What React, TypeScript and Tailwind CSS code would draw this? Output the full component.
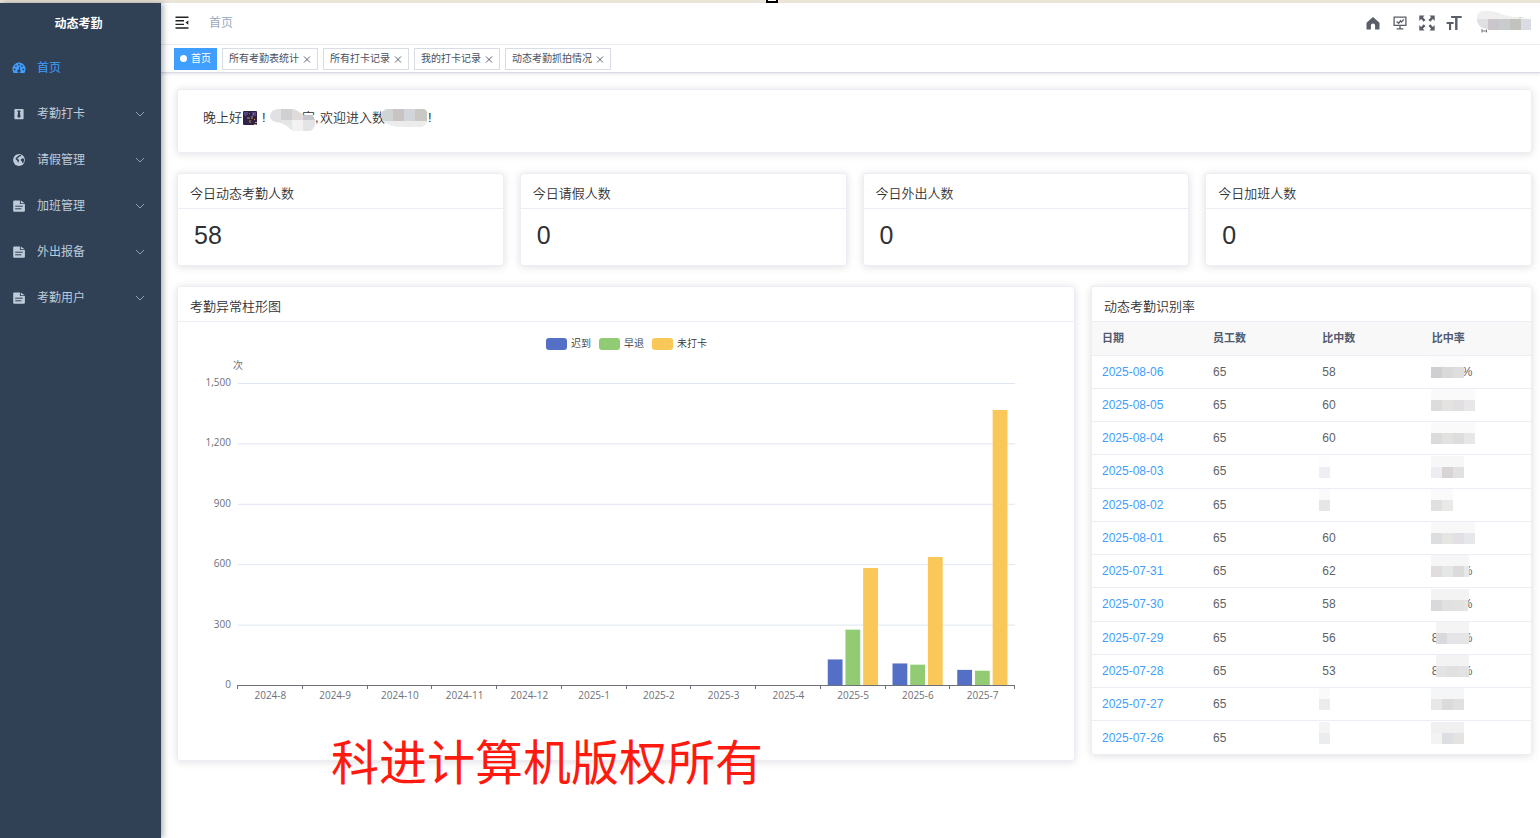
import type { ReactNode } from 'react';

type Block = [x: number, y: number, w: number, h: number, fill: string];

interface RateRow {
  date: string;
  staff: number;
  matched: number | null;
  rate: string;
  matchedBlocks?: Block[];
  rateBlocks: Block[];
}

const menu = [
  { label: '考勤打卡', icon: 'info' },
  { label: '请假管理', icon: 'globe' },
  { label: '加班管理', icon: 'file' },
  { label: '外出报备', icon: 'file' },
  { label: '考勤用户', icon: 'file' },
];

const tags = ['所有考勤表统计', '所有打卡记录', '我的打卡记录', '动态考勤抓拍情况'];

const stats = [
  { title: '今日动态考勤人数', value: 58 },
  { title: '今日请假人数', value: 0 },
  { title: '今日外出人数', value: 0 },
  { title: '今日加班人数', value: 0 },
];

const months = [
  '2024-8', '2024-9', '2024-10', '2024-11', '2024-12', '2025-1',
  '2025-2', '2025-3', '2025-4', '2025-5', '2025-6', '2025-7',
];

const series = [
  { name: '迟到', color: '#5470c6', data: [0, 0, 0, 0, 0, 0, 0, 0, 0, 127, 107, 75] },
  { name: '早退', color: '#91cc75', data: [0, 0, 0, 0, 0, 0, 0, 0, 0, 275, 101, 71] },
  { name: '未打卡', color: '#fac858', data: [0, 0, 0, 0, 0, 0, 0, 0, 0, 581, 636, 1366] },
];

// masked values: a pale upper strip and a darker lower strip
const strip = (x: number, colors: string[], top = '#fafafa'): Block[] => [
  [x, 0, colors.length * 11, 11, top],
  ...colors.map((c, i): Block => [x + i * 11, 11, 11, 11, c]),
];

const rows: RateRow[] = [
  { date: '2025-08-06', staff: 65, matched: 58, rate: '89.23%', rateBlocks: strip(0, ['#cfcfd1', '#d9d9d9', '#dededf'], '#fcfcfc') },
  { date: '2025-08-05', staff: 65, matched: 60, rate: '', rateBlocks: strip(0, ['#dcdcdd', '#e4e3e2', '#e1dfe0', '#e7e7e9']) },
  { date: '2025-08-04', staff: 65, matched: 60, rate: '', rateBlocks: strip(0, ['#dbdbdc', '#e2e2e1', '#dfdcdd', '#e7e7e9']) },
  { date: '2025-08-03', staff: 65, matched: null, rate: '', matchedBlocks: strip(0, ['#eeeef3'], '#fdfdfd'), rateBlocks: strip(0, ['#ededf1', '#d8d4d3', '#e1e1df'], '#f7f7f7') },
  { date: '2025-08-02', staff: 65, matched: null, rate: '', matchedBlocks: strip(0, ['#e5e6e8']), rateBlocks: strip(0, ['#dfe0e2', '#e9e9e8']) },
  { date: '2025-08-01', staff: 65, matched: 60, rate: '', rateBlocks: strip(0, ['#dddee0', '#e5e5e2', '#e2e0e4', '#e6e7e8'], '#f8f8f8') },
  { date: '2025-07-31', staff: 65, matched: 62, rate: '95.38%', rateBlocks: [...strip(0, ['#e1dddf', '#e5e7e6', '#dbdbda'], '#f6f6f6'), [33, 11, 5, 11, '#e6e7e8'], [33, 0, 5, 11, '#f6f6f6']] },
  { date: '2025-07-30', staff: 65, matched: 58, rate: '89.23%', rateBlocks: [...strip(0, ['#d9d9db', '#e1e1e1', '#e2e2e0'], '#f3f3f3'), [33, 11, 4, 11, '#e4e5e5'], [33, 0, 5, 11, '#f3f3f3']] },
  { date: '2025-07-29', staff: 65, matched: 56, rate: '86.15%', rateBlocks: strip(5, ['#dadadd', '#e5e4e8', '#e5e5e5'], '#f4f4f4') },
  { date: '2025-07-28', staff: 65, matched: 53, rate: '81.54%', rateBlocks: strip(5, ['#e3e3e3', '#e0e0df', '#e2e2e2'], '#f3f3f3') },
  { date: '2025-07-27', staff: 65, matched: null, rate: '', matchedBlocks: strip(0, ['#ececec']), rateBlocks: strip(0, ['#e9e6e6', '#dbdbdb', '#e2e0de'], '#f5f6f7') },
  { date: '2025-07-26', staff: 65, matched: null, rate: '', matchedBlocks: strip(0, ['#ebeced'], '#f5f4f5'), rateBlocks: strip(0, ['#f3f3f3', '#dddee1', '#e5e3e2'], '#f0f0f0') },
];

function MenuIcon({ name }: { name: string }) {
  if (name === 'home') {
    return (
      <svg viewBox="0 0 14 12" className="h-3 w-3.5 shrink-0">
        <path fill="currentColor" d="M7 .6A6.5 6.5 0 0 0 .5 7.1c0 1.4.4 2.9 1.1 4h10.8c.7-1.1 1.1-2.6 1.1-4A6.5 6.5 0 0 0 7 .6Z" />
        <g fill="#304156">
          <circle cx="2.7" cy="7.4" r=".9" />
          <circle cx="4" cy="4.1" r=".9" />
          <circle cx="7" cy="2.7" r=".9" />
          <circle cx="10" cy="4.1" r=".9" />
          <circle cx="11.3" cy="7.4" r=".9" />
          <path d="m7.4 4.6.9.2-.5 3a1.6 1.6 0 1 1-1-.2Z" />
        </g>
      </svg>
    );
  }
  if (name === 'info') {
    return (
      <svg viewBox="0 0 14 12" className="h-3 w-3.5 shrink-0">
        <rect x="2.4" y=".9" width="9.2" height="10.4" rx=".8" fill="currentColor" />
        <path fill="#304156" d="M5.4 2.4h3.2v1.1l-.7.5.7 4.8L7 10.1 5.4 8.8l.7-4.8-.7-.5Z" />
      </svg>
    );
  }
  if (name === 'globe') {
    return (
      <svg viewBox="0 0 14 12" className="h-3 w-3.5 shrink-0">
        <circle cx="7" cy="6" r="5.9" fill="currentColor" />
        <path fill="#304156" d="M7.4 1 9 1.1l.3.6-1.1.9-1.2.2-.5 1-1.1.4.1.7 1.2.5.5 1-.7 1.1-.2 1.3-.8-.8-.3-1.6L3.9 5.6l-.4-1.2 1.3-1.5Z" />
        <path fill="#304156" d="m8.9 5.3 1.4-1 1.6.5.3 1.6-1 2.5-.9.4-.3-1.9L8.8 6.6Z" />
      </svg>
    );
  }
  return (
    <svg viewBox="0 0 14 12" className="h-3 w-3.5 shrink-0">
      <path fill="currentColor" d="M2.2.4h5.7v3.7h5v6.6a1 1 0 0 1-1 1H2.2a1 1 0 0 1-1-1V1.4a1 1 0 0 1 1-1Z" />
      <path fill="currentColor" d="M8.8.5 12.7 3.3H8.8Z" />
      <path stroke="#304156" strokeWidth="1" d="M3.2 6.2h7.6M3.2 8.8h6.2" />
    </svg>
  );
}

function Chevron() {
  return (
    <svg viewBox="0 0 10 6" className="ml-auto h-1.5 w-2.5" fill="none" stroke="#909daa">
      <path d="m1 1 4 4 4-4" />
    </svg>
  );
}

function Sidebar() {
  return (
    <aside className="relative z-10 w-[161px] shrink-0 bg-[#304156] text-xs text-[#bfcbd9] shadow-[2px_0_6px_rgba(0,21,41,0.35)]">
      <h1 className="flex h-[41px] items-center justify-center pr-1 text-xs font-bold text-white">动态考勤</h1>
      <nav>
        <a href="#home" className="flex h-[47px] items-center gap-[11px] pr-4 pl-3 text-[#409eff]">
          <MenuIcon name="home" />
          首页
        </a>
        {menu.map((item) => (
          <button key={item.label} type="button" className="flex h-[46px] w-full items-center gap-[11px] pr-4 pl-3 text-left">
            <MenuIcon name={item.icon} />
            {item.label}
            <Chevron />
          </button>
        ))}
      </nav>
    </aside>
  );
}

function IconButton({ label, children }: { label: string; children: ReactNode }) {
  return (
    <button type="button" aria-label={label} className="h-4 w-4">
      {children}
    </button>
  );
}

function Navbar() {
  return (
    <header className="flex h-[42px] items-center border-b border-[#f0f1f2] pr-2 pb-px pl-[13px]">
      <button type="button" aria-label="折叠菜单" className="h-4 w-4">
        <svg viewBox="0 0 16 16" className="h-4 w-4" stroke="#222" strokeWidth="1.4">
          <path d="M1.5 2.2h13M1.5 5.8h8.5M1.5 9.4h8.5M1.5 13h13" />
          <path d="M14.3 5.4v4.4l-2.8-2.2Z" fill="#222" stroke="none" />
        </svg>
      </button>
      <a href="#home" className="ml-[19px] text-xs text-[#97a8be]">首页</a>
      <div className="ml-auto flex items-center gap-[11px]">
        <IconButton label="主页">
          <svg viewBox="0 0 16 16" className="h-4 w-4">
            <path fill="#5a5e66" d="M8 1.9 1.5 7.8v6.6h4.4v-3.8a2.1 2.1 0 0 1 4.2 0v3.8h4.4V7.8Z" />
          </svg>
        </IconButton>
        <IconButton label="监控">
          <svg viewBox="0 0 16 16" className="h-4 w-4" fill="none" stroke="#5a5e66" strokeWidth="1.3">
            <path d="M2.1 2.2h11.8v8.1H2.1ZM8 10.3v3.3M4.6 13.8h6.8" />
            <path d="m4.6 6.4 2.1 1.8 1.8-2.4 1 1.2 2.3-2.6" />
          </svg>
        </IconButton>
        <IconButton label="全屏">
          <svg viewBox="0 0 16 16" className="h-4 w-4" fill="#5a5e66">
            <path d="M.3.6h5.3L3.9 2.3l2.6 2.6-1.8 1.8L2.1 4.1.3 5.9Z" />
            <path d="M15.7.6v5.3l-1.8-1.8-2.6 2.6-1.8-1.8 2.6-2.6L10.4.6Z" />
            <path d="M.3 15.4v-5.3l1.8 1.8 2.6-2.6 1.8 1.8-2.6 2.6 1.7 1.7Z" />
            <path d="M15.7 15.4h-5.3l1.7-1.7-2.6-2.6 1.8-1.8 2.6 2.6 1.8-1.8Z" />
          </svg>
        </IconButton>
        <IconButton label="字体大小">
          <svg viewBox="0 0 16 16" className="h-4 w-4" fill="#5a5e66">
            <path d="M5.1.9h10.6v2.2h-4.2v11.8H9.1V3.1h-4Z" />
            <path d="M.6 7.1h7v1.9H5.1v5.9H3V9H.6Z" />
          </svg>
        </IconButton>
        <button type="button" aria-label="用户" className="ml-[3px]">
          <svg viewBox="0 0 56 24" className="h-6 w-14">
            <path stroke="#666" strokeWidth=".9" d="M6 18v3.5M10.5 18.6v2.8M6 20h5M43 6.7l5 1" />
            <path fill="#efeff0" d="M1 8C0 1 6-1 14 0c9 1 14 5 24 6 6 0 10 1 16 2v3H1Z" />
            <path fill="#e1dfe3" d="M1 8h11v10C5 18 1 14 1 8Z" />
            <path fill="#cac6cb" d="M12 8h11v11H12Z" />
            <path fill="#c9cccd" d="M23 8h11v11H23Z" />
            <path fill="#c2c3bf" d="M34 8h11v11H34Z" />
            <path fill="#d9dce2" d="M45 8h10v11H45Z" />
          </svg>
        </button>
      </div>
    </header>
  );
}

function TagsView() {
  return (
    <div className="flex h-7 items-center gap-[5px] border-b border-[#d8dce5] pl-[13px] text-[10px] text-[#495060] shadow-[0_1px_3px_rgba(0,0,0,0.12)]">
      <a href="#home" className="flex h-[22px] items-center gap-1 bg-[#409eff] px-1.5 text-white">
        <span className="size-[7px] rounded-full bg-white" />
        首页
      </a>
      {tags.map((tag) => (
        <div key={tag} className="flex h-[22px] items-center gap-1 border border-[#d8dce5] px-1.5">
          <a href="#tag">{tag}</a>
          <button type="button" aria-label={`关闭${tag}`} className="size-2">
            <svg viewBox="0 0 8 8" className="size-2" stroke="#495060" strokeWidth=".9">
              <path d="m1 1.5 6 6M7 1.5l-6 6" />
            </svg>
          </button>
        </div>
      ))}
    </div>
  );
}

function Card({ title, className = '', children }: { title?: string; className?: string; children: ReactNode }) {
  return (
    <section className={`overflow-hidden rounded-[3px] border border-[#ebeef5] bg-white shadow-[0_1px_9px_rgba(0,0,0,0.13)] ${className}`}>
      {title && (
        <h2 className="flex h-[35px] items-end border-b border-[#ebeef5] px-3 pb-1 text-[13px] leading-5 font-[350] text-[#303133]">
          {title}
        </h2>
      )}
      {children}
    </section>
  );
}

function NightEmoji() {
  return (
    <svg viewBox="0 0 14 14" className="mx-px size-3.5">
      <rect width="14" height="14" rx="1" fill="#2f2446" />
      <path fill="#54427c" d="M1 1h4v3H1ZM9 1h4v4H9Z" />
      <path fill="#7d6ba6" d="M10 2h1v2h-1ZM2 4h1v1H2ZM6 2h1v1H6Z" />
      <path fill="#7c5a52" d="M4 6h3v2H4ZM8 5h2v3H8ZM6 9h2v3H6Z" />
      <path fill="#c79a52" d="M11 8h1v1h-1ZM12 11h2v1h-2ZM11 13h2v1h-2Z" />
    </svg>
  );
}

function Welcome() {
  return (
    <Card className="h-16 px-6 pt-[18px]">
      <p className="flex items-center pl-px text-[13px] leading-5 font-[350] text-[#303133]">
        晚上好
        <NightEmoji />
        <span className="w-3 pl-1">!</span>
        <span className="relative flex w-[45px] justify-end">
          家
          <svg viewBox="0 0 45 24" className="absolute top-0 left-0 h-6 w-[45px]">
            <path fill="#e1e0e2" d="M0 9C0 3 4 1 10 1h1v14C5 14 1 13 0 9Z" />
            <path fill="#d0cfd2" d="M11 1h11v11H11Z" />
            <path fill="#dfdbdb" d="M22 1c4 0 6 3 11 5v6H22Z" />
            <path fill="#c8c9ce" d="M33 7h9c2 2 3 4 3 6H33Z" />
            <path fill="#e2e7e6" d="M11 12h11v10c-4-3-6-5-11-7Z" />
            <path fill="#f2f2f2" d="M22 12h11v11H22Z" />
            <path fill="#e3e4e6" d="M33 12h12c1 6-2 11-6 11h-6Z" />
          </svg>
        </span>
        <span className="w-[5px]">,</span>
        欢迎进入
        <span className="relative flex w-[56px]">
          数
          <svg viewBox="0 0 46 20" className="absolute top-0 left-[9px] h-5 w-[46px]">
            <path fill="#d0d4d5" d="M0 6c1-3 4-5 8-5h4v12H3C1 12 0 9 0 6Z" />
            <path fill="#c9c4c4" d="M12 1h11v12H12Z" />
            <path fill="#d2d6db" d="M23 1h11v12H23Z" />
            <path fill="#c9c8c4" d="M34 1h8c3 0 4 2 4 4v8H34Z" />
            <path fill="#ececec" d="M3 13h43c-1 4-3 6-8 6H23c-8 0-16-1-20-6Z" />
          </svg>
        </span>
        !
      </p>
    </Card>
  );
}

function BarChart() {
  const left = 60;
  const right = 837;
  const top = 61;
  const bottom = 363;
  const band = (right - left) / months.length;
  const y = (v: number) => bottom - (v / 1500) * (bottom - top);
  const legendX = [369, 422, 475];

  return (
    <svg viewBox="0 0 896 438" className="block w-full" role="img" aria-label="考勤异常柱形图">
      <g className="font-['Open_Sans','Noto_Sans_CJK_SC',sans-serif] text-[10px]">
        {series.map((s, i) => (
          <g key={s.name}>
            <rect x={legendX[i] - 1} y="16" width="21" height="12" rx="3" fill={s.color} />
            <text x={legendX[i] + 24} y="25" fill="#333" className="font-[350]">{s.name}</text>
          </g>
        ))}
        <text x={left} y="47" textAnchor="middle" fill="#6e7079">次</text>
        {[0, 300, 600, 900, 1200, 1500].map((v) => (
          <g key={v}>
            {v > 0 && <line x1={left} x2={right} y1={y(v) + 0.5} y2={y(v) + 0.5} stroke="#e0e6f1" />}
            <text x={left - 7} y={y(v) + 3} textAnchor="end" fill="#6e7079">{v.toLocaleString('en-US')}</text>
          </g>
        ))}
      </g>
      {series.map((s, si) =>
        s.data.map((v, mi) =>
          v > 0 ? (
            <rect
              key={`${s.name}-${months[mi]}`}
              x={left + band * mi + 7 + si * 17.7}
              y={y(v)}
              width="14.8"
              height={bottom - y(v)}
              fill={s.color}
            />
          ) : null,
        ),
      )}
      <path
        stroke="#6e7079"
        d={`M${left} ${bottom + 0.5}H${right}` + months.concat('').map((_, i) => `M${Math.round(left + band * i) - 0.5} ${bottom}v4`).join('')}
      />
      <g className="font-['Open_Sans',sans-serif] text-[10px]" fill="#6e7079" textAnchor="middle">
        {months.map((m, i) => (
          <text key={m} x={left + band * (i + 0.5)} y={bottom + 14}>{m}</text>
        ))}
      </g>
    </svg>
  );
}

function Mask({ blocks, className }: { blocks: Block[]; className: string }) {
  return (
    <svg viewBox="0 0 50 22" className={`absolute bottom-2.5 h-[22px] w-[50px] ${className}`} aria-hidden="true">
      {blocks.map(([x, y, w, h, fill]) => (
        <rect key={`${x}-${y}`} x={x} y={y} width={w} height={h} fill={fill} />
      ))}
    </svg>
  );
}

function RateTable() {
  return (
    <table className="h-[432px] w-full table-fixed text-left text-xs text-[#606266]">
      <thead className="bg-[#f8f8f9] text-[11px] text-[#515a6e]">
        <tr className="h-[33px] border-b border-[#ebeef5]">
          <th className="w-[111px] px-2.5 font-bold">日期</th>
          <th className="px-2.5 font-bold">员工数</th>
          <th className="px-2.5 font-bold">比中数</th>
          <th className="px-2.5 font-bold">比中率</th>
        </tr>
      </thead>
      <tbody>
        {rows.map((r) => (
          <tr key={r.date} className="h-[33px] border-b border-[#ebeef5] last:border-b-0">
            <td className="px-2.5">
              <a href={`#${r.date}`} className="text-[#409eff]">{r.date}</a>
            </td>
            <td className="px-2.5">{r.staff}</td>
            <td className="relative px-2.5">
              {r.matched}
              {r.matchedBlocks && <Mask blocks={r.matchedBlocks} className="left-[7px]" />}
            </td>
            <td className="relative px-2.5">
              {r.rate}
              <Mask blocks={r.rateBlocks} className="left-[9px]" />
            </td>
          </tr>
        ))}
      </tbody>
    </table>
  );
}

export default function App() {
  return (
    <div className="relative flex min-h-screen flex-col bg-white font-['Liberation_Sans','Noto_Sans_CJK_SC',sans-serif]">
      <div className="flex h-[3px] justify-center bg-[#ebe4d9]">
        <span className="ml-1 h-[3px] w-3 border-x-2 border-b-2 border-black bg-white" />
      </div>
      <div className="flex grow">
        <Sidebar />
        <div className="min-w-0 grow">
          <Navbar />
          <TagsView />
          <main className="flex flex-col gap-5 pt-4 pr-2 pb-6 pl-4">
            <Welcome />
            <div className="grid grid-cols-4 gap-4">
              {stats.map((s) => (
                <Card key={s.title} title={s.title}>
                  <p className="px-4 pt-2 pb-3 text-[25px] leading-9 text-[#303133]">{s.value}</p>
                </Card>
              ))}
            </div>
            <div className="grid grid-cols-[896fr_440fr] items-start gap-4">
              <Card title="考勤异常柱形图">
                <BarChart />
              </Card>
              <Card title="动态考勤识别率">
                <RateTable />
              </Card>
            </div>
          </main>
        </div>
      </div>
      <p className="absolute top-[736px] left-[331px] z-20 text-5xl leading-[56px] whitespace-nowrap text-[#ff1a10]">
        科进计算机版权所有
      </p>
    </div>
  );
}
